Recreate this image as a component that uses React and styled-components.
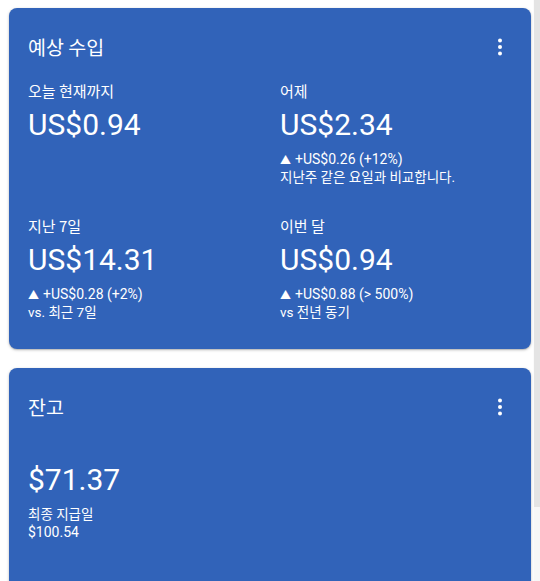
import styled, { createGlobalStyle } from "styled-components";

const GlobalStyle = createGlobalStyle`
  html, body {
    margin: 0;
    padding: 0;
    background: #ffffff;
    overflow: hidden;
  }
  body {
    font-family: Roboto, "Noto Sans CJK KR", sans-serif;
  }
`;

const Page = styled.div`
  display: flex;
  height: 100vh;
  overflow: hidden;
  background: #ffffff;
`;

const Content = styled.div`
  flex: 1;
  min-width: 0;
`;

const Rail = styled.div`
  width: 7px;
  flex-shrink: 0;
  background: #f7f7f7;
  border-left: 1px solid #fbfbfb;
  box-sizing: border-box;
`;

const Thumb = styled.div`
  height: ${({ $size }) => $size}px;
  background: #e4e4e4;
`;

const Stack = styled.div`
  display: flex;
  flex-direction: column;
  gap: 19px;
  padding: 8px 2px 16px 9px;
`;

const Card = styled.section`
  background: #3163b9;
  border-radius: 8px;
  box-shadow: 0 1px 3px rgba(0, 0, 0, 0.25), 0 1px 1px rgba(0, 0, 0, 0.1);
  color: #ffffff;
  padding: 27px 19px 28px 19px;
  min-height: ${({ $minHeight }) => $minHeight || "auto"};
  box-sizing: border-box;
`;

const Header = styled.div`
  display: flex;
  justify-content: space-between;
  align-items: center;
  height: 24px;
`;

const Title = styled.h2`
  margin: 0;
  font-size: 19.5px;
  font-weight: 400;
  line-height: 24px;
  font-family: "Noto Sans CJK KR", Roboto, sans-serif;
`;

const MenuButton = styled.div`
  display: flex;
  width: 24px;
  height: 24px;
`;

const Grid = styled.div`
  display: grid;
  grid-template-columns: 252px 1fr;
  row-gap: 30px;
  margin-top: 22px;
`;

const Metric = styled.div`
  display: flex;
  flex-direction: column;
`;

const Label = styled.div`
  font-family: "Noto Sans CJK KR", Roboto, sans-serif;
  font-size: 15px;
  line-height: 20px;
`;

const Amount = styled.div`
  font-family: Roboto, sans-serif;
  font-size: 30px;
  line-height: 36px;
  margin-top: ${({ $flush }) => ($flush ? "0" : "6px")};
`;

const Sub = styled.div`
  margin-top: 7px;
  line-height: 18px;
  font-family: Roboto, "Noto Sans CJK KR", sans-serif;
`;

const SubLine = styled.div`
  white-space: nowrap;
  height: 18px;
  font-size: ${({ $latin }) => ($latin ? "14px" : "13.5px")};
`;

const Arrow = styled.span`
  font-size: 11px;
  line-height: 0;
  margin-right: 4px;
`;

const Balance = styled.div`
  margin-top: 43px;
`;

function MoreIcon() {
  return (
    <svg width="24" height="24" viewBox="0 0 24 24" fill="#ffffff">
      <circle cx="12" cy="5.5" r="2" />
      <circle cx="12" cy="12" r="2" />
      <circle cx="12" cy="18.5" r="2" />
    </svg>
  );
}

const metrics = [
  { label: "오늘 현재까지", amount: "US$0.94" },
  {
    label: "어제",
    amount: "US$2.34",
    change: "+US$0.26 (+12%)",
    note: "지난주 같은 요일과 비교합니다.",
  },
  {
    label: "지난 7일",
    amount: "US$14.31",
    change: "+US$0.28 (+2%)",
    note: "vs. 최근 7일",
  },
  {
    label: "이번 달",
    amount: "US$0.94",
    change: "+US$0.88 (> 500%)",
    note: "vs 전년 동기",
  },
];

export default function App() {
  return (
    <>
      <GlobalStyle />
      <Page>
        <Content>
          <Stack>
            <Card>
              <Header>
                <Title>예상 수입</Title>
                <MenuButton>
                  <MoreIcon />
                </MenuButton>
              </Header>
              <Grid>
                {metrics.map((m) => (
                  <Metric key={m.label}>
                    <Label>{m.label}</Label>
                    <Amount>{m.amount}</Amount>
                    {m.change && (
                      <Sub>
                        <SubLine $latin>
                          <Arrow>▲</Arrow>
                          {m.change}
                        </SubLine>
                        <SubLine>{m.note}</SubLine>
                      </Sub>
                    )}
                  </Metric>
                ))}
              </Grid>
            </Card>
            <Card $minHeight="280px">
              <Header>
                <Title>잔고</Title>
                <MenuButton>
                  <MoreIcon />
                </MenuButton>
              </Header>
              <Balance>
                <Amount $flush>$71.37</Amount>
                <Sub>
                  <SubLine>최종 지급일</SubLine>
                  <SubLine $latin>$100.54</SubLine>
                </Sub>
              </Balance>
            </Card>
          </Stack>
        </Content>
        <Rail>
          <Thumb $size={507} />
        </Rail>
      </Page>
    </>
  );
}
